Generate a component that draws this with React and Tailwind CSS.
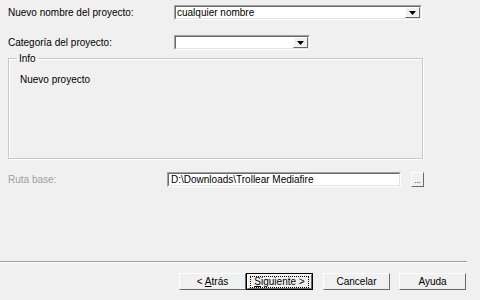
import React from 'react'

const font = { fontFamily: '"Liberation Sans", Arial, sans-serif' }

function Arrow() {
  return (
    <span className="flex w-[15px] shrink-0 items-center justify-center border border-t-white border-l-white border-r-[#696969] border-b-[#696969] bg-[#f0f0f0]">
      <svg width="7" height="4" viewBox="0 0 7 4">
        <polygon points="0,0 7,0 3.5,4" fill="#000" />
      </svg>
    </span>
  )
}

function Combo({ width, value }) {
  return (
    <div className={`flex h-[15px] ${width} border border-t-[#a0a0a0] border-l-[#a0a0a0] border-r-white border-b-white`}>
      <div className="flex flex-1 border border-t-[#696969] border-l-[#696969] border-r-[#e3e3e3] border-b-[#e3e3e3] bg-white">
        <span className="flex-1 pl-[1px] leading-[12px] text-black">{value}</span>
        <Arrow />
      </div>
    </div>
  )
}

function Button({ children, primary }) {
  return (
    <button
      className={`flex h-[17px] w-[67px] items-center justify-center border text-[10px] leading-none ${
        primary ? 'border-black' : 'border-t-white border-l-white border-r-[#696969] border-b-[#696969]'
      } bg-[#f0f0f0]`}
    >
      {primary ? (
        <span className="flex h-full w-full items-center justify-center border border-t-white border-l-white border-r-[#696969] border-b-[#696969]">
          <span className="border border-dotted border-black px-[3px]">{children}</span>
        </span>
      ) : (
        <span>{children}</span>
      )}
    </button>
  )
}

export default function App() {
  return (
    <div className="flex h-[300px] w-[480px] flex-col bg-[#f0f0f0] text-[10px] text-black" style={font}>
      <div className="flex items-center pt-[5px] pl-[8px]">
        <span className="w-[166px]">Nuevo nombre del proyecto:</span>
        <Combo width="w-[248px]" value="cualquier nombre" />
      </div>

      <div className="mt-[15px] flex items-center pl-[8px]">
        <span className="w-[166px]">Categoría del proyecto:</span>
        <Combo width="w-[136px]" />
      </div>

      <fieldset className="mt-[3px] ml-[8px] h-[106px] w-[415px] border border-[#c8c8c8] shadow-[inset_1px_1px_0_#fff,1px_1px_0_#fff] px-[11px]">
        <legend className="px-[2px] ml-[-3px] leading-[11px]">Info</legend>
        <div className="pt-[8px]">Nuevo proyecto</div>
      </fieldset>

      <div className="mt-[13px] flex items-center pl-[8px]">
        <span className="w-[159px] text-[#a0a0a0]">Ruta base:</span>
        <div className="flex h-[15px] w-[234px] border border-t-[#a0a0a0] border-l-[#a0a0a0] border-r-white border-b-white">
          <div className="flex-1 border border-t-[#696969] border-l-[#696969] border-r-[#e3e3e3] border-b-[#e3e3e3] bg-white pl-[2px] leading-[12px]">
            D:\Downloads\Trollear Mediafire
          </div>
        </div>
        <button className="ml-[10px] flex h-[15px] w-[13px] items-end justify-center border border-t-white border-l-white border-r-[#696969] border-b-[#696969] bg-[#f0f0f0] pb-[1px] text-[8px] leading-none">
          ...
        </button>
      </div>

      <div className="mt-auto mb-[10px] w-[467px] border-t border-t-[#a0a0a0] border-b border-b-white" />

      <div className="mb-[10px] flex pl-[179px]">
        <Button>
          &lt; <span className="underline">A</span>trás
        </Button>
        <Button primary>
          <span className="underline">S</span>iguiente &gt;
        </Button>
        <div className="ml-[10px]">
          <Button>Cancelar</Button>
        </div>
        <div className="ml-[9px]">
          <Button>Ayuda</Button>
        </div>
      </div>
    </div>
  )
}
